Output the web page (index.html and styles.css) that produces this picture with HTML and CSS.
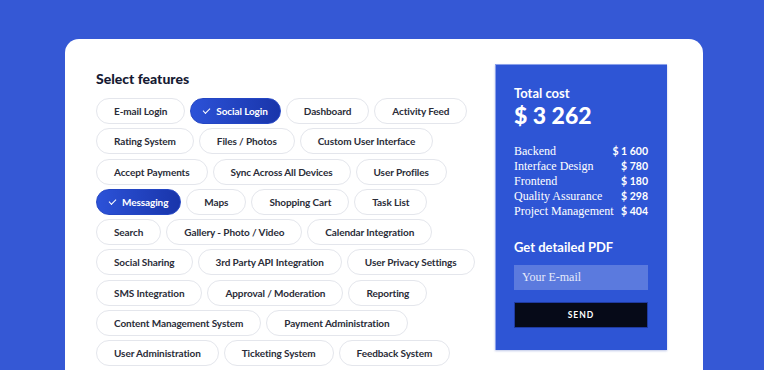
FILE: index.html
```html
<!DOCTYPE html>
<html lang="en">
<head>
  <meta charset="UTF-8">
  <meta name="viewport" content="width=device-width, initial-scale=1.0">
  <title>Estimate</title>
  <link rel="stylesheet" href="styles.css">
</head>
<body>
  <div class="card">
    <div class="features">
      <h2>Select features</h2>
      <div class="chips">
        <div class="row">
          <span class="chip">E-mail Login</span>
          <span class="chip active">Social Login</span>
          <span class="chip">Dashboard</span>
          <span class="chip">Activity Feed</span>
        </div>
        <div class="row">
          <span class="chip">Rating System</span>
          <span class="chip">Files / Photos</span>
          <span class="chip">Custom User Interface</span>
        </div>
        <div class="row">
          <span class="chip">Accept Payments</span>
          <span class="chip">Sync Across All Devices</span>
          <span class="chip">User Profiles</span>
        </div>
        <div class="row">
          <span class="chip active">Messaging</span>
          <span class="chip">Maps</span>
          <span class="chip">Shopping Cart</span>
          <span class="chip">Task List</span>
        </div>
        <div class="row">
          <span class="chip">Search</span>
          <span class="chip">Gallery - Photo / Video</span>
          <span class="chip">Calendar Integration</span>
        </div>
        <div class="row">
          <span class="chip">Social Sharing</span>
          <span class="chip">3rd Party API Integration</span>
          <span class="chip">User Privacy Settings</span>
        </div>
        <div class="row">
          <span class="chip">SMS Integration</span>
          <span class="chip">Approval / Moderation</span>
          <span class="chip">Reporting</span>
        </div>
        <div class="row">
          <span class="chip">Content Management System</span>
          <span class="chip">Payment Administration</span>
        </div>
        <div class="row">
          <span class="chip">User Administration</span>
          <span class="chip">Ticketing System</span>
          <span class="chip">Feedback System</span>
        </div>
      </div>
    </div>

    <div class="summary">
      <div class="total-label">Total cost</div>
      <div class="total">$ 3 262</div>
      <ul class="items">
        <li><span>Backend</span><b>$ 1 600</b></li>
        <li><span>Interface Design</span><b>$ 780</b></li>
        <li><span>Frontend</span><b>$ 180</b></li>
        <li><span>Quality Assurance</span><b>$ 298</b></li>
        <li><span>Project Management</span><b>$ 404</b></li>
      </ul>
      <h3>Get detailed PDF</h3>
      <input class="email" type="text" placeholder="Your E-mail">
      <button class="send">SEND</button>
    </div>
  </div>
</body>
</html>
```

FILE: styles.css
```css
body{
  margin: 0;
  background: #3558d5;
  font-family: "Lato", "Liberation Sans", sans-serif;
  height: 370px;
  overflow: hidden;
}

.card{
  display: flex;
  justify-content: space-between;
  margin: 39px 61px 0 65px;
  padding: 25px 36px 0 31px;
  height: 331px;
  box-sizing: border-box;
  background: #fff;
  border-radius: 14px 14px 0 0;
}

.features{
  padding-top: 6px;
}

.features h2{
  margin: 0 0 10px;
  font-size: 14px;
  font-weight: 900;
  color: #161a33;
  line-height: 18px;
}

.chips{
  display: flex;
  flex-direction: column;
  gap: 4.3px;
}

.chips .row{
  display: flex;
  gap: 5px;
}

.chip{
  display: flex;
  align-items: center;
  justify-content: center;
  height: 26px;
  padding: 0 17px;
  box-sizing: border-box;
  border: 1px solid #e4e6ec;
  border-radius: 14px;
  font-size: 10px;
  font-weight: 700;
  letter-spacing: -0.1px;
  color: #2a2c38;
  white-space: nowrap;
}

.chip.active{
  padding: 0 12px;
  border-color: #2446c4;
  background: linear-gradient(90deg, #2c52d8, #1935aa);
  color: #fff;
}

.chip.active::before{
  content: "";
  width: 6px;
  height: 3px;
  margin: -2px 6px 0 0;
  border-left: 1.5px solid #fff;
  border-bottom: 1.5px solid #fff;
  transform: rotate(-45deg);
}

.summary{
  flex-shrink: 0;
  width: 172px;
  height: 286px;
  box-sizing: border-box;
  padding: 20px 19px 0 18px;
  background: #2e55d5;
  border-top: 1px solid #8aa0ea;
  border-left: 1px solid #8aa0ea;
  box-shadow: 0 1px 2px rgba(40, 70, 180, 0.3);
  color: #fff;
}

.total-label{
  font-size: 13px;
  font-weight: 700;
  line-height: 17px;
}

.total{
  font-size: 23px;
  font-weight: 900;
  line-height: 26px;
  margin-bottom: 16px;
}

.items{
  list-style: none;
  margin: 0;
  padding: 0;
}

.items li{
  display: flex;
  justify-content: space-between;
  align-items: baseline;
  line-height: 15px;
  font-family: "Liberation Serif", serif;
  font-size: 12px;
}

.items b{
  font-family: "Lato", "Liberation Sans", sans-serif;
  font-size: 10.5px;
  font-weight: 700;
}

.summary h3{
  margin: 20px 0 10px;
  font-size: 13px;
  font-weight: 700;
  line-height: 16px;
}

.email{
  display: block;
  width: 100%;
  height: 25px;
  box-sizing: border-box;
  padding: 0 8px;
  border: 0;
  background: rgba(255, 255, 255, 0.22);
  font-family: "Liberation Serif", serif;
  font-size: 12px;
  color: #fff;
}

.email::placeholder{
  color: #e6ebfb;
}

.send{
  display: block;
  width: 100%;
  height: 26px;
  margin-top: 12px;
  border: 1px solid #1f3aa0;
  background: #060a18;
  color: #fff;
  font-family: "Lato", "Liberation Sans", sans-serif;
  font-size: 8.5px;
  font-weight: 700;
  letter-spacing: 1px;
}
```
